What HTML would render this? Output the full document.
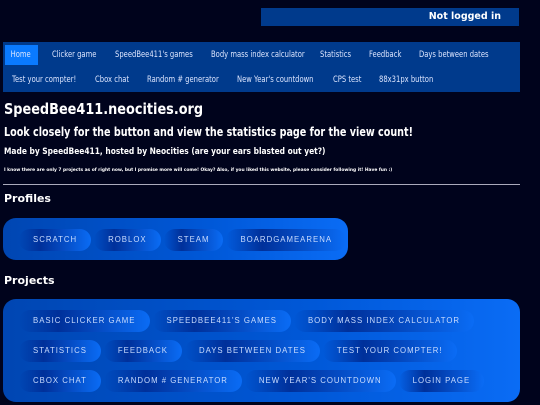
<!DOCTYPE html>
<html><head><style>
*{margin:0;padding:0;box-sizing:border-box}
body{width:540px;height:405px;background:#00031c;color:#fff;font-family:"DejaVu Sans","Liberation Sans",sans-serif;overflow:hidden;position:relative}
.top{position:absolute;left:261px;top:8px;width:258px;height:18px;background:#003a8c;font-weight:bold;font-size:9.5px;text-align:right;padding-right:18px;line-height:18px}
.nav{position:absolute;left:3px;top:42px;width:517px;height:50px;background:#003a8c;font-size:8.5px;color:#dde6ff}
.nav span{position:absolute;line-height:20px;transform:scaleX(0.8);transform-origin:left;white-space:nowrap}
.nav .home{background:#0a7aff;left:2px;top:3px;width:33px;transform:none;}
.home i{font-style:normal;display:inline-block;transform:scaleX(0.8);transform-origin:left;padding-left:7px}
h1,h2,.made{white-space:nowrap;transform-origin:left}
h1{position:absolute;left:4px;top:100px;font-size:15.5px;font-weight:bold;transform:scaleX(0.83)}
h2{position:absolute;left:4px;top:125px;font-size:12px;font-weight:bold;transform:scaleX(0.8)}
.made{position:absolute;left:4px;top:147px;font-size:9px;font-weight:bold;transform:scaleX(0.83)}
.small{position:absolute;left:4px;top:168px;font-size:4.4px;font-weight:bold;white-space:nowrap}
hr{position:absolute;left:3px;top:184px;width:517px;border:0;border-top:1px solid #aab;}
.lbl{position:absolute;left:4px;font-size:11px;font-weight:bold}
.box{position:absolute;left:3px;border-radius:13px;background:linear-gradient(90deg,#0046b2,#0058d8 60%,#0a6cf5)}
.row{position:absolute;left:19px;display:flex;gap:3px}
.b{height:22px;line-height:22px;border-radius:11px;padding:0 14px;font-family:"Liberation Sans",sans-serif;font-size:7.8px;letter-spacing:1px;color:#c9dcff;background:linear-gradient(90deg,rgba(0,40,130,0),#00309a 30%,#0a6cf5);white-space:nowrap}
</style></head><body>
<div class="top">Not logged in</div>
<div class="nav">
<span class="home"><i>Home</i></span>
<span style="left:49px;top:3px">Clicker game</span>
<span style="left:112px;top:3px">SpeedBee411's games</span>
<span style="left:208px;top:3px">Body mass index calculator</span>
<span style="left:317px;top:3px">Statistics</span>
<span style="left:366px;top:3px">Feedback</span>
<span style="left:416px;top:3px">Days between dates</span>
<span style="left:9px;top:28px">Test your compter!</span>
<span style="left:92px;top:28px">Cbox chat</span>
<span style="left:144px;top:28px">Random # generator</span>
<span style="left:234px;top:28px">New Year's countdown</span>
<span style="left:330px;top:28px">CPS test</span>
<span style="left:376px;top:28px">88x31px button</span>
</div>
<h1>SpeedBee411.neocities.org</h1>
<h2>Look closely for the button and view the statistics page for the view count!</h2>
<div class="made">Made by SpeedBee411, hosted by Neocities (are your ears blasted out yet?)</div>
<div class="small">I know there are only 7 projects as of right now, but I promise more will come! Okay? Also, if you liked this website, please consider following it! Have fun :)</div>
<hr>
<div class="lbl" style="top:192px">Profiles</div>
<div class="box" style="top:218px;width:345px;height:42px"></div>
<div class="row" style="top:229px"><span class="b">SCRATCH</span><span class="b">ROBLOX</span><span class="b">STEAM</span><span class="b">BOARDGAMEARENA</span></div>
<div class="lbl" style="top:274px">Projects</div>
<div class="box" style="top:299px;width:517px;height:103px"></div>
<div class="row" style="top:310px"><span class="b">BASIC CLICKER GAME</span><span class="b">SPEEDBEE411'S GAMES</span><span class="b">BODY MASS INDEX CALCULATOR</span></div>
<div class="row" style="top:340px"><span class="b">STATISTICS</span><span class="b">FEEDBACK</span><span class="b">DAYS BETWEEN DATES</span><span class="b">TEST YOUR COMPTER!</span></div>
<div class="row" style="top:370px"><span class="b">CBOX CHAT</span><span class="b">RANDOM # GENERATOR</span><span class="b">NEW YEAR'S COUNTDOWN</span><span class="b">LOGIN PAGE</span></div>
</body></html>
